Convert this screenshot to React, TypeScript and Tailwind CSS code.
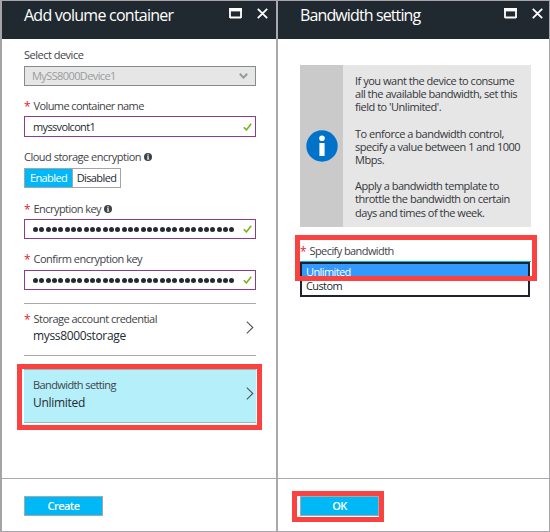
import type { ReactNode } from "react";

function Header({ title, className }: { title: string; className: string }) {
  return (
    <header className={`flex h-[38px] shrink-0 items-start bg-[#212930] pl-[22px] text-white ${className}`}>
      <h1 className="flex-1 whitespace-nowrap pt-[1px] text-[16px] leading-[26px]">{title}</h1>
      <svg className="mt-[7px] h-[11px] w-[13px]" viewBox="0 0 13 11" fill="none">
        <path d="M1 9.5h11M1 1v9M12 1v9" stroke="white" strokeWidth="1.8" />
        <path d="M0 0h13v3.4H0z" fill="white" />
      </svg>
      <svg className="ml-[15px] mt-[7px] h-[11px] w-[11px]" viewBox="0 0 11 11" fill="none">
        <path d="M.8.8l9.4 9.4M10.2.8L.8 10.2" stroke="white" strokeWidth="1.8" />
      </svg>
    </header>
  );
}

function Label({ children, required, info, className }: { children: ReactNode; required?: boolean; info?: boolean; className: string }) {
  return (
    <div className="flex h-4 items-center whitespace-nowrap text-[11px] leading-4 text-[#414347]">
      {required && <Star />}
      <span className={className}>{children}</span>
      {info && (
        <svg className="ml-[3px] h-2 w-2" viewBox="0 0 8 8">
          <circle cx="4" cy="4" r="4" fill="#3c4248" />
          <path d="M3.4 1.3h1.3v1.2H3.4zM3 3.2h1.7v2.6h.6v.8H2.9v-.8h.6V4H3z" fill="white" />
        </svg>
      )}
    </div>
  );
}

function Star() {
  return <span className="h-4 w-[9.5px] shrink-0 text-[12px] leading-[18px] text-[#e3202b]">*</span>;
}

function Check() {
  return (
    <svg className="h-[8px] w-[9px] shrink-0" viewBox="0 0 9 8" fill="none">
      <path d="M.8 4.3l2.6 2.6L8.2.8" stroke="#76b417" strokeWidth="1.6" />
    </svg>
  );
}

function Field({ children, className }: { children: ReactNode; className: string }) {
  return (
    <div className={`flex items-center justify-between border border-[#8b3d8d] pl-[8px] pr-[3px] ${className}`}>
      {children}
      <Check />
    </div>
  );
}

function Dots() {
  return (
    <div className="flex gap-[1.33px]">
      {Array.from({ length: 32 }, (_, i) => (
        <i key={i} className="h-[5px] w-[5px] rounded-full bg-[#242b33]" />
      ))}
    </div>
  );
}

function Chevron() {
  return (
    <svg className="h-[13px] w-[8px] shrink-0" viewBox="0 0 8 13" fill="none">
      <path d="M.8.6l6 5.9-6 5.9" stroke="#50545a" strokeWidth="1.1" />
    </svg>
  );
}

function Button({ children }: { children: ReactNode }) {
  return (
    <button className="flex h-5 w-[79px] items-center justify-center border border-[#a3a9ae] bg-[#00b8f5] text-[11px] font-semibold leading-4 tracking-[-0.5px] text-white">
      {children}
    </button>
  );
}

export default function App() {
  return (
    <main className="flex h-[532px] w-[550px] overflow-hidden border-y border-l-2 border-r border-[#a7a4a9] bg-white font-['Open_Sans','Noto_Sans',sans-serif]">
      <section className="flex w-[274px] flex-col">
        <Header title="Add volume container" className="pr-[8px] tracking-[-0.75px]" />
        <div className="flex flex-1 flex-col pl-[22px] pr-[20px] pt-[8px]">
          <Label className="tracking-[-0.5px]">Select device</Label>
          <div className="mt-[3px] flex h-5 items-center justify-between border border-[#858b8d] bg-[#e6e6e6] pl-[7px] pr-[7px] text-[11px] text-[#9a9b9c]">
            <span className="tracking-[-0.6px]">MySS8000Device1</span>
            <svg className="h-[6px] w-[9px]" viewBox="0 0 9 6" fill="none">
              <path d="M.8.8l3.7 3.8L8.2.8" stroke="#96999b" strokeWidth="2" />
            </svg>
          </div>
          <div className="mt-[12px]">
            <Label required className="tracking-[-0.6px]">Volume container name</Label>
          </div>
          <Field className="mt-[2px] h-[21px]">
            <span className="text-[11px] leading-4 tracking-[-0.65px] text-[#252a30]">myssvolcont1</span>
          </Field>
          <div className="mt-[12px]">
            <Label info className="tracking-[-0.5px]">Cloud storage encryption</Label>
          </div>
          <div className="mt-[3px] flex h-5 w-[97px] border border-[#a7a4a9] text-[11px] leading-[18px] tracking-[-0.6px]">
            <span className="flex w-[48px] justify-center border-r border-[#a7a4a9] bg-[#00b8f9] text-white">Enabled</span>
            <span className="flex flex-1 justify-center text-[#252a30]">Disabled</span>
          </div>
          <div className="mt-[13px]">
            <Label required info className="tracking-[-0.55px]">Encryption key</Label>
          </div>
          <Field className="mt-[2px] h-5"><Dots /></Field>
          <div className="mt-[12px]">
            <Label required className="tracking-[-0.5px]">Confirm encryption key</Label>
          </div>
          <Field className="mt-[3px] h-5"><Dots /></Field>
          <div className="mt-[13px] flex h-[53px] items-start justify-between border-y border-[#aaa7ad] pr-[2px]">
            <div className="pt-[7px]">
              <Label required className="tracking-[-0.52px]">Storage account credential</Label>
              <p className="mt-[1px] pl-[9px] text-[12px] leading-4 tracking-[-0.35px] text-[#252a30]">myss8000storage</p>
            </div>
            <div className="pt-[17px]"><Chevron /></div>
          </div>
          <div className="-ml-[7px] -mr-[6px] mt-[8px] h-[66px] border-[5px] border-[#fa4240] pl-[2px] pr-[1px]">
            <div className="flex h-[54px] items-start justify-between border-y border-[#9fb4bb] bg-[#b4effa] pl-[9px] pr-[2px]">
              <div className="pt-[7px]">
                <Label className="tracking-[-0.6px]">Bandwidth setting</Label>
                <p className="mt-[2px] text-[12px] leading-4 tracking-[-0.3px] text-[#252a30]">Unlimited</p>
              </div>
              <div className="pt-[17px]"><Chevron /></div>
            </div>
          </div>
        </div>
        <footer className="h-[53px] border-t border-[#aaa7ad] pl-[22px] pt-[17px]"><Button>Create</Button></footer>
      </section>
      <section className="flex w-[273px] flex-col border-l-2 border-[#aaa7ad]">
        <Header title="Bandwidth setting" className="pr-[6px] tracking-[-0.88px]" />
        <div className="flex-1 pl-[22px] pt-[26px]">
          <div className="flex h-[162px] w-[231px] bg-[#e6e6e6]">
            <div className="flex w-[43px] items-center justify-center bg-[#cacaca]">
              <svg className="h-[32px] w-[32px]" viewBox="0 0 32 32">
                <circle cx="16" cy="16" r="15.7" fill="#0072c9" />
                <circle cx="16" cy="8.3" r="2.8" fill="white" />
                <path d="M13.4 13h5.2v13h-5.2z" fill="white" />
              </svg>
            </div>
            <div className="flex flex-col gap-[13px] whitespace-nowrap pl-[12px] pt-[9px] text-[11px] leading-[13.2px] tracking-[-0.48px] text-[#33363b]">
              <p>If you want the device to consume<br />all the available bandwidth, set this<br />field to 'Unlimited'.</p>
              <p>To enforce a bandwidth control,<br />specify a value between 1 and 1000<br />Mbps.</p>
              <p>Apply a bandwidth template to<br />throttle the bandwidth on certain<br />days and times of the week.</p>
            </div>
          </div>
          <div className="relative pt-[16px]">
            <Label required className="tracking-[-0.58px]">Specify bandwidth</Label>
            <div className="mt-[2px] w-[231px] border-t border-[#00b8f5]">
              <div className="h-[35px] w-[230px] border-2 border-[#20232b] text-[11px] leading-[15px] tracking-[-0.6px] text-[#252a30]">
                <div className="h-[15px] bg-[#3399ff] pl-[4px] text-white">Unlimited</div>
                <div className="-mt-px pl-[4px]">Custom</div>
              </div>
            </div>
            <div className="absolute -left-[5px] top-[8px] h-[46px] w-[242px] border-[5px] border-[#fa4240]" />
          </div>
        </div>
        <footer className="h-[53px] border-t border-[#aaa7ad] pl-[14px] pt-[12px]">
          <div className="h-[31px] w-[92px] border-[5px] border-[#fa4240] pl-[3px]"><Button>OK</Button></div>
        </footer>
      </section>
    </main>
  );
}
